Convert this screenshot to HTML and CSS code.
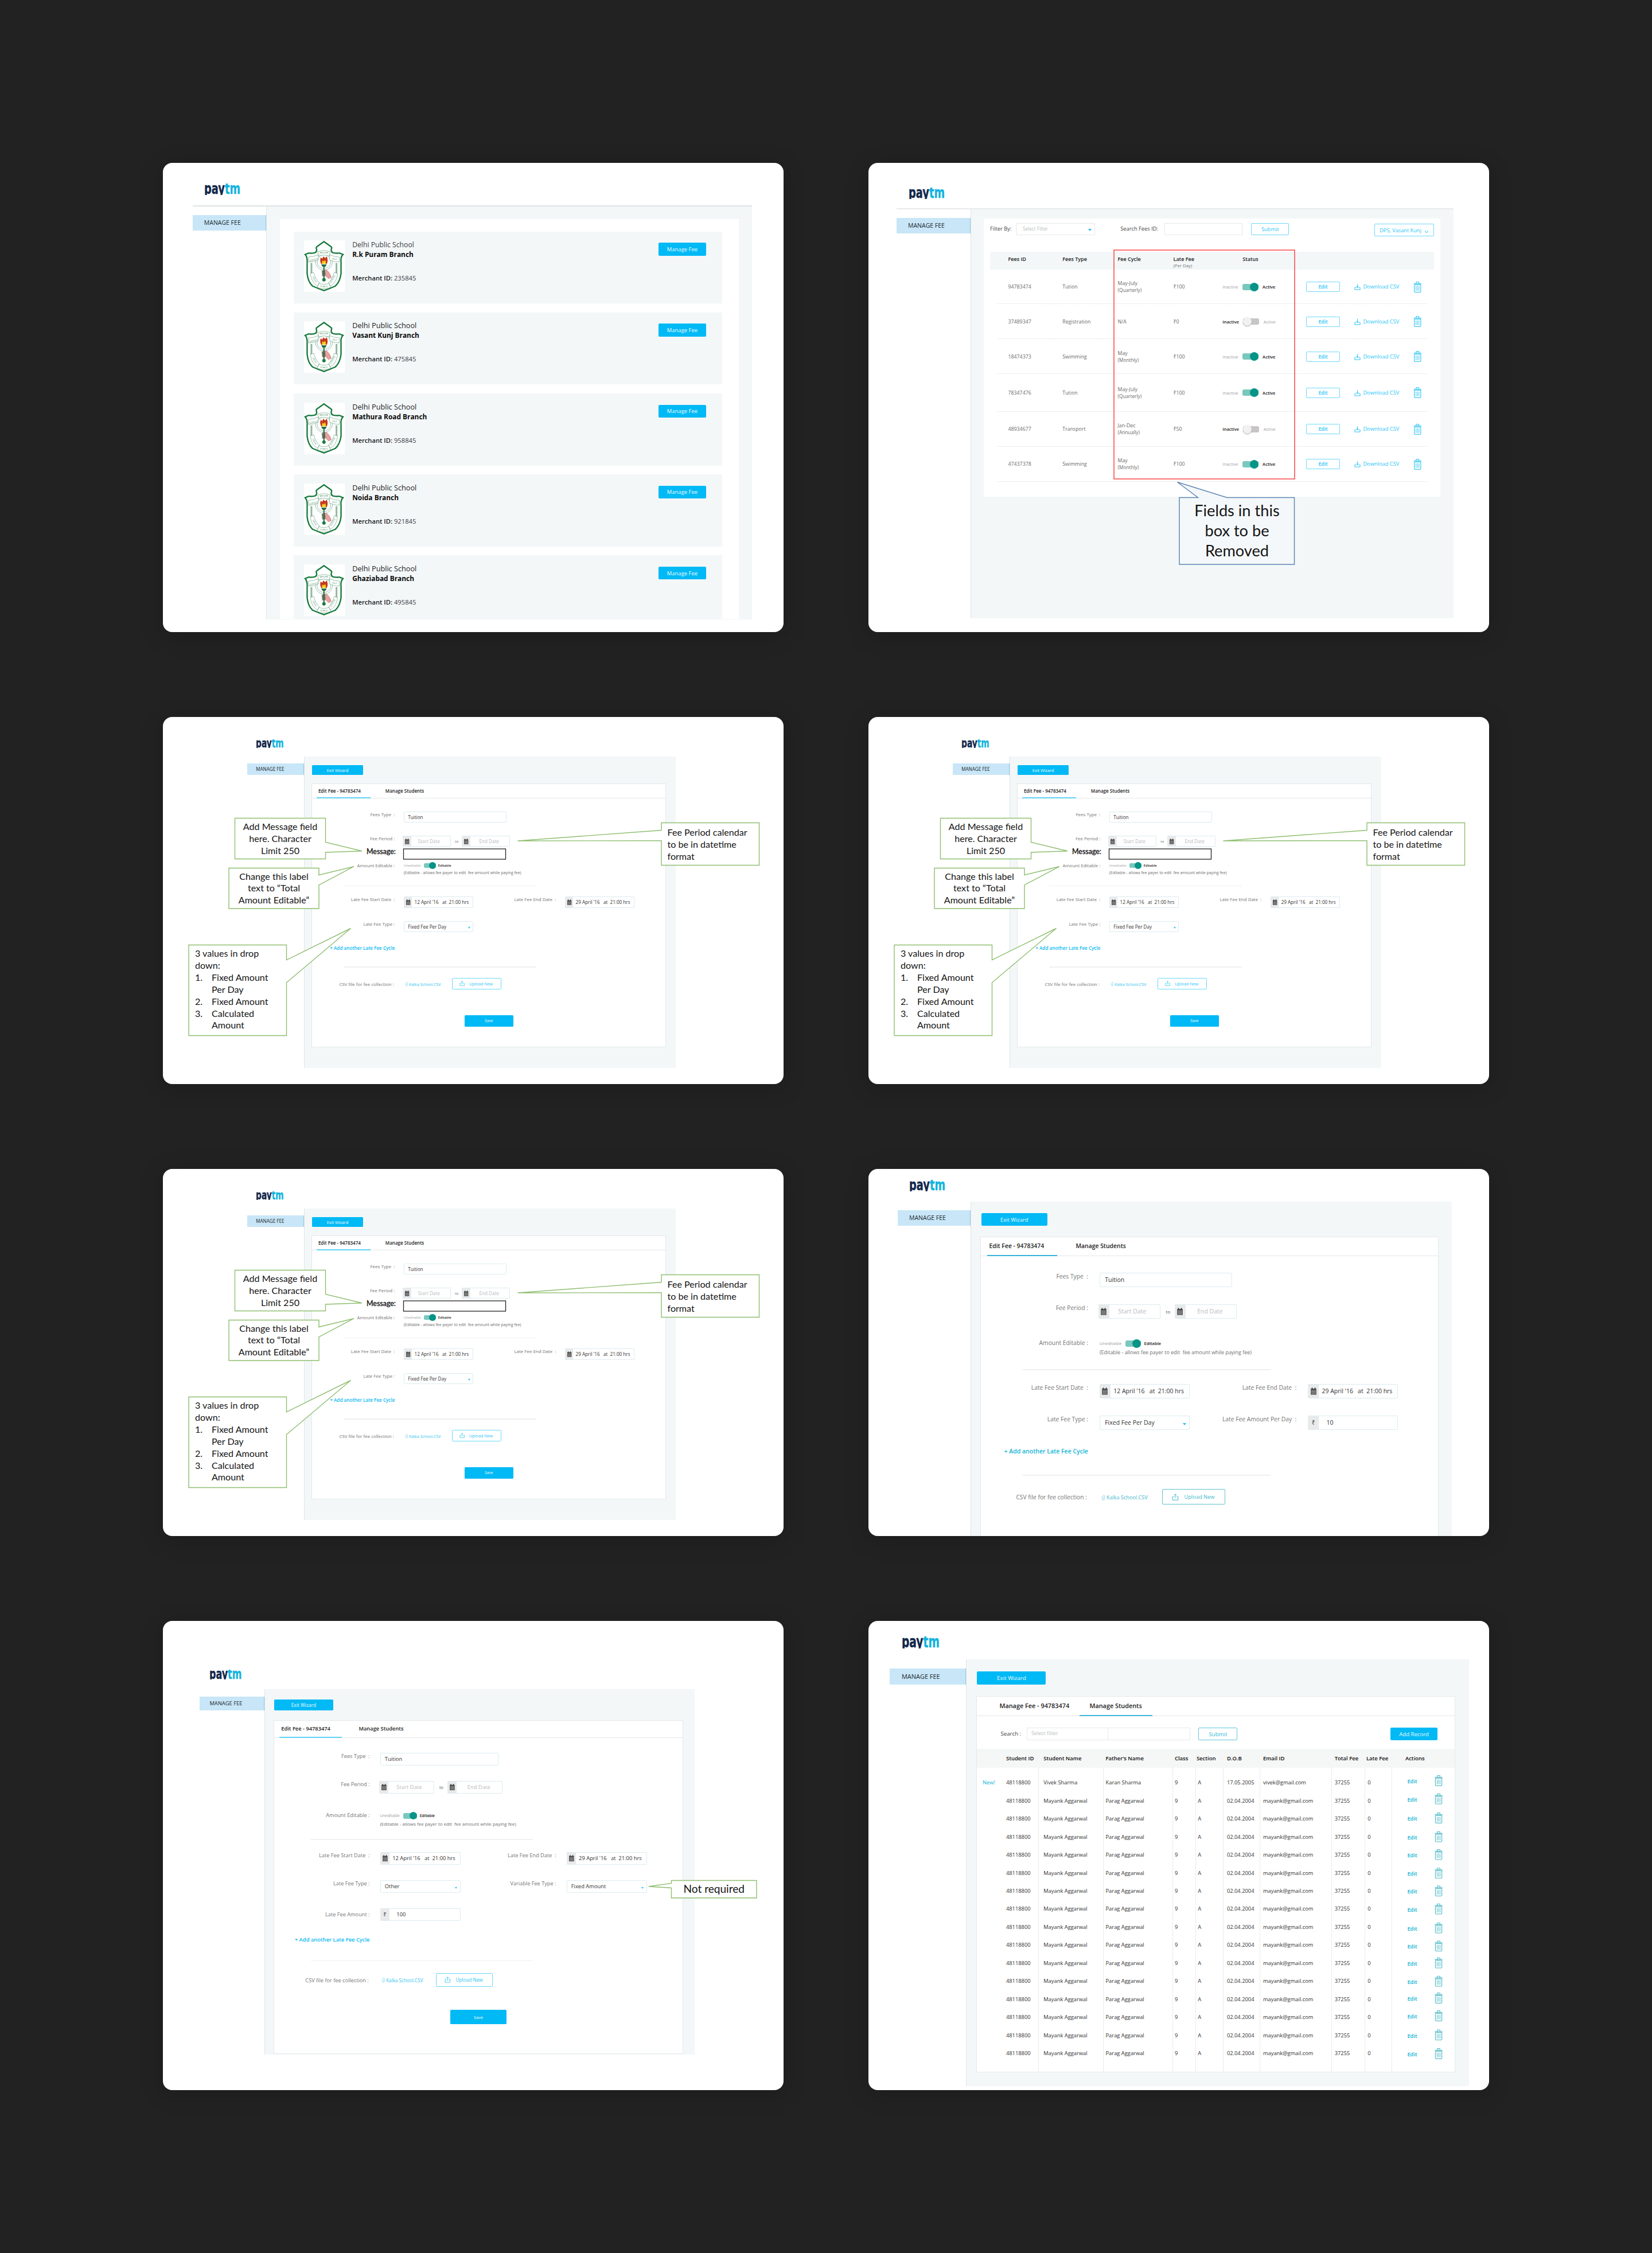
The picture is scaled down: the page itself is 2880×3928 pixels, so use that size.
FILE: index.html
```html
<!DOCTYPE html>
<html lang="en">
<head>
<meta charset="utf-8">
<title>Paytm fee management screens</title>
<link rel="stylesheet" href="styles.css">
</head>
<body>
<svg class="sprite" aria-hidden="true">
  <symbol id="trash" viewBox="0 0 14 19"><g fill="none" stroke="currentColor"><path d="M.3 3.6H13.7M4.6 3.4V1.4Q4.6.6 5.4.6H8.6Q9.4.6 9.4 1.4V3.4M1.4 5.4V17Q1.4 18.4 2.8 18.4H11.2Q12.6 18.4 12.6 17V5.4H1.4" stroke-width="1.2"/><path d="M4.4 7.6V15.8M7 7.6V15.8M9.6 7.6V15.8" stroke-width="1"/></g></symbol>
  <symbol id="calendar" viewBox="0 0 12 13"><path d="M1.200 2H10.800V12.6H1.200Z" fill="#4a4a4a"/><path d="M3.500.2V3M8.500.2V3" stroke="#333" stroke-width="1.500"/><path d="M1.800 5H10.200M1.800 7.500H10.200M1.800 10H10.200M3.800 5V12M6 5V12M8.200 5V12" stroke="#b5b5b5" stroke-width=".6"/></symbol>
  <symbol id="download" viewBox="0 0 12 12"><g fill="none" stroke="currentColor" stroke-width="1.1"><path d="M6 .5V7.5M3.6 5.2L6 7.6L8.4 5.2M3.2 7.6H1V11.4H11V7.6H8.8"/></g></symbol>
  <symbol id="upload" viewBox="0 0 12 12"><g fill="none" stroke="currentColor" stroke-width="1"><path d="M6 8V1M3.8 3L6 .8L8.2 3M3.6 5.4H1.2V11.2H10.8V5.4H8.4"/></g></symbol>
  <symbol id="clip" viewBox="0 0 8 12"><path d="M5.6 2.4V8.6Q5.6 10 4.4 10T3.2 8.6V3Q3.2.8 5 .8T7 3V8.8Q7 11.4 4.4 11.4T1.6 8.8V3.4" fill="none" stroke="currentColor" stroke-width=".6"/></symbol>
  <symbol id="logo" viewBox="0 0 63 20"><text x="0" y="17.800" textLength="63" lengthAdjust="spacingAndGlyphs" class="logo-text"><tspan fill="#12284c" stroke="#12284c">pay</tspan><tspan fill="#12b3dd" stroke="#12b3dd">tm</tspan></text></symbol>
  <symbol id="crest" viewBox="0 0 72 90">
    <path fill="#fff" d="M0 0H72V90H0Z"/>
    <path d="M35 2L23 10.5Q20.5 12 22 15Q23 20.500 19 21.500Q12 23 8 22L2 24.500Q6 29 5.500 38V58Q7 73 15 80Q24 84 35 88Q46 84 55 80Q63 73 65 58V38Q64 29 68.500 24.500L62 22Q58 23 51 21.500Q47 20.500 48 15Q49.500 12 47 10.500Z" fill="#fff" stroke="#187a3e" stroke-width="2.400"/>
    <g fill="#fff" stroke="#6ea587" stroke-width=".7"><circle cx="35" cy="37" r="15"/><circle cx="35" cy="37" r="12"/><path d="M8 29Q16 29 25 25V34Q17 38 8 38ZM62 29Q54 29 45 25V34Q53 38 62 38ZM24 20Q35 15 46 20L44 27Q35 24 26 27Z"/><path d="M11 58L17 56Q20 68 27 74L24 80Q13 74 11 58ZM59 58L53 56Q50 68 43 74L46 80Q57 74 59 58ZM26 75Q35 79 44 75L47 82Q35 88 23 82Z"/></g>
    <path d="M13 40V57M57 40V57" stroke="#4b8f68" stroke-width="3" stroke-dasharray="1.300 .7"/>
    <path d="M34 51L40 52Q46 57 48 65L43 67L38 62L34 63Z" fill="#e8a0a0" stroke="#a66" stroke-width=".5"/>
    <path d="M31 53L37 52L38 61L32 63Z" fill="#7d7a68"/>
    <path d="M30 42H40L37.500 46H32.500ZM34 46H36V68H34Z" fill="#256b45"/><circle cx="35" cy="69" r="3" fill="#187a3e"/>
    <path d="M30 41Q27 34 29.500 30L32 32L34 28L37 31L40 28Q43 36 40 41Z" fill="#c3391d"/><path d="M32 41Q31 37 33 35L35 37L37 34Q39 38 38 41Z" fill="#f6d21c"/>
    <g class="crest-text"><text x="9.500" y="35.500" transform="rotate(-12 16 34)">SERVICE</text><text x="27.500" y="23">BEFORE</text><text x="49" y="34" transform="rotate(10 54 34)">SELF</text><text x="28.500" y="82">PUBLIC</text><text x="13" y="69" transform="rotate(60 18 68)">DELHI</text><text x="44" y="69" transform="rotate(-60 51 69)">SCHOOL</text></g>
  </symbol>
</svg>

<main class="board">
  <section class="card tall card-schools">
    <svg class="logo"><use href="#logo"/></svg>
    <div class="shell ruled">
      <nav class="side"><a class="side-item">MANAGE FEE</a></nav>
      <div class="content"><div class="school-list" id="schools"></div></div>
    </div>
  </section>

  <section class="card tall card-fees">
    <svg class="logo"><use href="#logo"/></svg>
    <div class="shell ruled">
      <nav class="side"><a class="side-item">MANAGE FEE</a></nav>
      <div class="content">
        <div class="fees-panel">
          <div class="filters">
            <label>Filter By:</label><span class="box select">Select Filter<i class="caret"></i></span>
            <label class="search-label">Search Fees ID:</label><span class="box"></span>
            <button class="outline submit">Submit</button>
            <button class="outline branch">DPS, Vasant Kunj<svg viewBox="0 0 8 6"><path d="M1 1L4 5L7 1" fill="none" stroke="currentColor"/></svg></button>
          </div>
          <div class="fee-row fee-head"><b>Fees ID</b><b>Fees Type</b><b>Fee Cycle</b><b>Late Fee<small>(Per Day)</small></b><b class="status-title">Status</b></div>
          <div id="fees"></div>
        </div>
      </div>
    </div>
    <svg class="marks" viewBox="0 0 1082 818"><rect x="428" y="152" width="315" height="399" fill="none" stroke="#f8383a" stroke-width="1.400"/><path d="M542 583.500H574.500L538.500 556.500L625 583.500H742.500V700H542Z" fill="#f4f8fa" stroke="#5f87b2" stroke-width="1.500"/></svg>
    <p class="note note-remove">Fields in this<br>box to be<br>Removed</p>
  </section>

  <section class="card card-edit" data-form="annotated"></section>
  <section class="card card-edit" data-form="annotated"></section>
  <section class="card card-edit" data-form="annotated"></section>
  <section class="card card-large" data-form="perday"></section>
  <section class="card tall card-other" data-form="other"></section>

  <section class="card tall card-students">
    <svg class="logo"><use href="#logo"/></svg>
    <div class="shell">
      <nav class="side"><a class="side-item">MANAGE FEE</a></nav>
      <div class="content">
        <button class="solid exit">Exit Wizard</button>
        <div class="panel">
          <div class="tabs"><span class="tab">Manage Fee - 94783474</span><span class="tab active">Manage Students</span></div>
          <div class="search-bar"><label>Search :</label><span class="box">Select filter</span><span class="box second"></span><button class="outline">Submit</button><button class="solid add">Add Record</button></div>
          <div class="students">
            <div class="student head"><b></b><b>Student ID</b><b>Student Name</b><b>Father’s Name</b><b>Class</b><b>Section</b><b>D.O.B</b><b>Email ID</b><b>Total Fee</b><b>Late Fee</b><b class="actions">Actions</b></div>
            <div class="student-body" id="students"></div>
          </div>
        </div>
      </div>
    </div>
  </section>
</main>
<script src="app.js"></script>
</body>
</html>
```
FILE: styles.css
```css
* { box-sizing: border-box; }
body { margin: 0; background: #222; font-family: "Open Sans", "Noto Sans", sans-serif; color: #333; }
.sprite { display: none; }
button { font: inherit; padding: 0; margin: 0; white-space: nowrap; }
.board { width: 2880px; height: 3928px; padding: 284px; display: grid; grid-template-columns: 1082px 1082px; grid-template-rows: 818px 640px 640px 818px; gap: 148px; }
.card { --x: 1px; --y: 1px; position: relative; overflow: hidden; background: #fff; border-radius: 16px; box-shadow: 0 6px 40px rgba(0,0,0,.18); display: flex; flex-direction: column; align-items: flex-start; white-space: nowrap; }
.logo { display: block; width: calc(63 * var(--x)); height: calc(20 * var(--x)); flex: none; }
.logo-text { font-family: "DejaVu Sans", sans-serif; font-weight: 700; font-size: 27px; stroke-width: .5px; }
.crest-text { font-size: 4px; fill: #4b8f68; }

/* application shell */
.shell { display: flex; flex: none; }
.side { width: calc(127.4 * var(--x)); padding-top: calc(15 * var(--y)); }
.side-item { display: block; height: calc(27 * var(--y)); line-height: calc(27 * var(--y)); padding-left: calc(20 * var(--x)); background: #c8e6f7; border-right: 1px solid #8fcbe2; font-size: calc(10.500 * var(--x)); color: #20282e; }
.content { width: calc(838.2 * var(--x)); background: #f3f7f8; border-left: 1px solid #dfe5e7; }
.solid { display: block; border: 0; border-radius: calc(2 * var(--x)); background: #00b9f5; color: #f0fbff; font-size: calc(9.400 * var(--x)); }
.outline { border: 1.5px solid #6fd9fa; border-radius: calc(2 * var(--x)); background: #fff; color: #2cc6f6; }

/* school list */
.card-schools { padding-left: 51.8px; }
.card-schools .logo { margin: 36px 0 0 20px; }
.card-schools .ruled { margin-top: 17.7px; }
.ruled { border-top: 2px solid #dfe3e4; }
.card-schools .side { width: 128.4px; }
.card-schools .content { width: 847px; height: 720px; padding: 22.500px 23px 0; }
.school-list { background: #fff; height: 697px; padding: 21.500px 29px 0 24px; overflow: hidden; }
.school { height: 125.600px; margin-bottom: 15.600px; background: #f3f7f8; display: flex; padding: 14.500px 28px 0 18px; }
.school svg { width: 71.500px; height: 90px; margin: 1px 12.500px 0 0; flex: none; }
.school div { flex: 1; line-height: 17px; font-size: 12.700px; color: #1f2326; }
.school:first-child .name { font-size: 12.200px; color: #3c4043; }
.school strong { display: block; font-size: 11.900px; color: #0c0c0c; }
.school .mid { margin: 24px 0 0; font-size: 11.200px; color: #3c4043; }
.school .mid b { font-weight: 600; color: #181818; }
.school .solid { width: 83.500px; height: 22.400px; margin-top: 5px; font-size: 9.500px; }

/* fee table */
.card-fees { padding-left: 49px; }
.card-fees .logo { margin: 42.500px 0 0 20.500px; }
.card-fees .ruled { margin-top: 16.500px; border-color: #e8eaeb; }
.card-fees .side { width: 128.500px; }
.card-fees .content { width: 842.500px; height: 713px; padding: 16.300px 23px 0 22.500px; }
.fees-panel { background: #fff; height: 484.700px; padding: 7.600px 11px 0; }
.filters { display: flex; align-items: flex-start; height: 50px; font-size: 9.300px; color: #444; }
.filters label { width: 46px; line-height: 20px; }
.filters .search-label { width: 76.500px; margin-left: 44.500px; }
.box { display: block; border: 1.500px solid #e6e9ea; background: #fff; color: #bbbec0; }
.filters .box { width: 136.700px; height: 21px; padding-left: 10px; line-height: 18px; font-size: 8.200px; position: relative; }
.caret { position: absolute; right: calc(5 * var(--x)); top: 50%; border: calc(3 * var(--x)) solid transparent; border-top: calc(4 * var(--x)) solid #2cc3f2; border-bottom: 0; }
.filters .submit { width: 66px; height: 21px; margin-left: 15px; font-size: 9.200px; }
.filters .branch { width: 104px; height: 21.500px; margin: 1.500px 0 0 auto; font-size: 9.200px; }
.branch svg { width: 8px; height: 6px; margin-left: 5px; vertical-align: -2px; }
.fee-row { display: grid; grid-template-columns: 94.800px 96.200px 97px 85.800px 145.600px 84px 103.500px 20px; padding-left: 31.500px; align-items: center; font-size: 8.800px; color: #6c6c6c; position: relative; }
.fee-head { height: 31px; background: #f3f7f8; align-items: start; line-height: 26px; font-size: 9px; color: #222; }
.fee-head b { font-weight: 600; position: relative; }
.fee-head small { position: absolute; left: 0; top: 11.500px; font-size: 7.800px; font-weight: 400; color: #777; }
.fee-head .status-title { padding-left: 35px; }
.fee-item::after { content: ""; position: absolute; left: 13px; right: 12px; bottom: 0; border-bottom: 1px dotted #d9dddd; }
.fee-item { line-height: 12px; }
.fee-item small { display: block; font-size: 8.300px; }
.status { display: flex; align-items: center; font-size: calc(7.600 * var(--x)); color: #a2a2a2; }
.status b { color: #222; font-weight: 600; }
.toggle { display: block; position: relative; width: calc(28 * var(--x)); height: calc(11 * var(--x)); border-radius: calc(3 * var(--x)); background: #78c8be; margin: 0 calc(7.500 * var(--x)) 0 calc(7 * var(--x)); }
.toggle::after { content: ""; position: absolute; top: calc(-2 * var(--x)); right: 0; width: calc(15 * var(--x)); height: calc(15 * var(--x)); border-radius: 50%; background: #079487; }
.toggle.off { background: #c7c5c6; }
.toggle.off::after { right: auto; left: 0; background: #f1f1f1; box-shadow: 0 1px 2px #aaa; }
.fee-item .outline { width: 59.500px; height: 18px; font-size: 8.800px; font-weight: 600; }
.dl { color: #2cc6f6; font-size: 9.300px; display: flex; align-items: center; }
.dl svg { width: 11px; height: 12px; margin-right: 4.500px; }
.fee-item .trash { width: 14.500px; height: 19px; color: #3fc9f3; }

/* wizard form */
.exit { width: calc(114.700 * var(--x)); height: calc(22 * var(--y)); margin: calc(20 * var(--y)) 0 0 calc(17.500 * var(--x)); }
.panel { width: calc(798.500 * var(--x)); margin: calc(19.300 * var(--y)) 0 0 calc(16 * var(--x)); background: #fff; border: 1px solid #e4e9eb; }
.tabs { display: flex; height: calc(33 * var(--y)); border-bottom: 1px solid #e4e7e8; font-size: calc(10.400 * var(--x)); font-weight: 600; line-height: calc(31 * var(--y)); color: #222; }
.tab { position: relative; }
.card-edit, .card-large, .card-other { --line: #5fd1f8; }
.card-large { --line: #35b3de; }
.tab.active::after { content: ""; position: absolute; left: 0; right: 0; bottom: -1px; height: 2px; background: var(--line); }
.form .tab.active { width: calc(121.800 * var(--x)); margin: 0 calc(32.800 * var(--x)) 0 calc(10.500 * var(--x)); padding-left: calc(3.500 * var(--x)); }
.row { display: flex; align-items: flex-start; height: calc(25.200 * var(--y)); margin-top: calc(29.800 * var(--y)); font-size: calc(10.500 * var(--x)); }
.row > label { width: calc(186.500 * var(--x)); margin-right: calc(20.300 * var(--x)); text-align: right; line-height: calc(13 * var(--y)); font-size: calc(10.300 * var(--x)); color: #767676; white-space: pre; flex: none; }
.field { position: relative; display: flex; width: calc(156.500 * var(--x)); height: calc(25 * var(--y)); border: 1px solid #dcebf0; border-radius: calc(2 * var(--x)); line-height: calc(22.500 * var(--y)); padding-left: calc(8 * var(--x)); color: #333; flex: none; white-space: pre; }
.field.wide { width: calc(231 * var(--x)); }
.field.icon { padding-left: 0; border-left: 0; }
.field em { width: calc(18.500 * var(--x)); margin-right: calc(5.500 * var(--x)); background: #e8eaeb; display: flex; align-items: center; justify-content: center; font-style: normal; flex: none; }
.field em svg { width: calc(12 * var(--x)); height: calc(13 * var(--x)); }
.field.money em { margin-right: calc(13.500 * var(--x)); }
.field .caret { top: 55%; }
.field.short { width: calc(107.500 * var(--x)); color: #b9bcbe; margin-left: calc(-2 * var(--x)); }
.field.short em { margin-right: calc(15.500 * var(--x)); }
.field.short.end em { margin-right: calc(20.500 * var(--x)); }
.to { width: calc(27.500 * var(--x)); text-align: center; font-size: calc(8 * var(--x)); line-height: calc(25 * var(--y)); color: #555; }
.tabs + .row { margin-top: calc(28.800 * var(--y)); }
.row.period { margin-top: calc(30 * var(--y)); height: calc(24.800 * var(--y)); }
.row.editable { height: calc(16 * var(--y)); margin-top: calc(35 * var(--y)); }
.row.editable > label { line-height: calc(15.500 * var(--y)); }
.row .status { height: calc(16 * var(--y)); margin-left: calc(-.500 * var(--x)); }
.row .toggle { width: calc(27 * var(--x)); margin: 0 calc(5 * var(--x)) 0 calc(7 * var(--x)); }
.hint { height: calc(12 * var(--y)); line-height: calc(12 * var(--y)); margin: calc(2.300 * var(--y)) 0 0 calc(206.500 * var(--x)); font-size: calc(8.950 * var(--x)); color: #6f6f6f; white-space: pre; }
.divider { height: calc(2 * var(--y)); margin: calc(23 * var(--y)) 0 calc(-6.500 * var(--y)) calc(71.500 * var(--x)); width: calc(433.500 * var(--x)); background: #eef0f1; }
.more { width: calc(186.500 * var(--x)); height: calc(14 * var(--y)); line-height: calc(14 * var(--y)); margin-top: calc(29.800 * var(--y)); display: flex; justify-content: flex-end; font-size: calc(10.500 * var(--x)); font-weight: 600; color: #0abaf2; }
.card-large .more { color: #12b4d4; }
.more + .divider { margin-top: calc(34.800 * var(--y)); margin-bottom: 0; }
.row.upload { height: calc(26.300 * var(--y)); margin-top: calc(23 * var(--y)); }
.row.upload > label { width: calc(184.500 * var(--x)); line-height: calc(28 * var(--y)); margin-right: calc(25 * var(--x)); }
.file { display: flex; align-items: center; width: calc(106 * var(--x)); height: calc(28.500 * var(--y)); font-size: calc(9.100 * var(--x)); color: #35c5ee; }
.file svg { width: calc(7 * var(--x)); height: calc(12 * var(--x)); margin-right: calc(2 * var(--x)); opacity: .7; }
.upload button { display: flex; align-items: center; width: calc(110.400 * var(--x)); height: calc(26.500 * var(--y)); padding-left: calc(16 * var(--x)); font-size: calc(9.300 * var(--x)); }
.upload button svg { width: calc(12 * var(--x)); height: calc(12 * var(--x)); margin-right: calc(9.500 * var(--x)); }
.card-large .outline, .card-large .file { color: #3fb9cd; border-color: #60c2cd; }
.save { width: calc(110 * var(--x)); height: calc(27 * var(--y)); margin: calc(58 * var(--y)) 0 0 calc(343.400 * var(--x)); font-size: calc(8.600 * var(--x)); }

.card-edit { --x: .7736px; --y: .769px; padding-left: 146.700px; }
.card-edit .logo { margin: 39px 0 0 15.500px; }
.card-edit .shell { margin-top: 14.500px; }
.card-edit .side { width: 99px; }
.card-edit .content { height: 543px; }
.card-edit .panel { height: 460px; }
.card-large { padding-left: 51px; }
.card-large .logo { margin: 18.500px 0 0 19.500px; }
.card-large .shell { margin-top: 18.500px; }
.card-large .content, .card-students .content { flex: none; }
.card-large .panel { height: 540px; }
.card-other { --x: .8944px; --y: .894px; padding-left: 63.500px; }
.card-other .logo { margin: 84.500px 0 0 17.500px; }
.card-other .shell { margin-top: 16.300px; }
.card-other .content { height: 637px; }
.card-other .panel { height: 582px; }
.card-other .more + .divider { margin-top: calc(32.400 * var(--y)); }
.card-other .save { margin-top: calc(45.900 * var(--y)); }
.row.amount > label { line-height: calc(25 * var(--y)); }

/* review notes laid over the screens */
.marks { position: absolute; left: 0; top: 0; width: 100%; height: 100%; }
.note { position: absolute; margin: 0; font-family: Lato, sans-serif; font-size: 16.100px; line-height: 20.900px; color: #141414; text-align: center; }
.note-remove { left: 542px; top: 589px; width: 201px; font-size: 27.200px; line-height: 34.800px; }
.note-message { left: 125.500px; top: 181px; width: 158px; }
.note-label { left: 115px; top: 267.500px; width: 157px; }
.note-values { left: 56px; top: 402px; text-align: left; }
.note-values ol { margin: 0; padding: 0 0 0 29px; list-style: none; counter-reset: n; }
.note-values li { counter-increment: n; position: relative; }
.note-values li::before { content: counter(n) "."; position: absolute; left: -29px; }
.note-period { left: 879.500px; top: 191px; text-align: left; }
.note-msg { left: 355px; top: 225px; font-size: 12.400px; font-weight: 500; -webkit-text-stroke: .3px #1c1c1c; }
.note-not { left: 886.500px; top: 457px; width: 148.500px; font-size: 19.100px; }

/* student list */
.card-students { --x: 1.0455px; --y: 1.045px; --line: #3fb6d8; padding-left: 37px; }
.card-students .logo { margin: 27px 0 0 21px; }
.card-students .shell { margin-top: 19px; }
.card-students .content { height: 744px; }
.card-students .panel { height: 656px; }
.card-students .tab { margin-left: 39.500px; width: 139.500px; }
.card-students .tab.active { margin-left: 0; padding-left: 17.500px; width: 126.700px; }
.search-bar { display: flex; align-items: flex-start; height: 57px; padding: 20px 0 0 41.500px; font-size: 9.700px; line-height: 21px; color: #444; }
.search-bar label { width: 45.500px; }
.search-bar .box { width: 142.500px; height: 21.500px; padding-left: 7px; line-height: 18px; font-size: 9px; }
.search-bar .second { border-left: 0; }
.search-bar .outline { width: 68px; height: 22px; margin-left: 14.500px; border-color: #5fc6d8; color: #35b9d6; }
.search-bar .add { width: 81.400px; height: 21.500px; margin-left: 267px; font-size: 9.600px; }
.student { display: grid; grid-template-columns: 51px 65.300px 108.300px 120.400px 38px 53px 63px 124.800px 55.200px 58px 1fr; height: 31.450px; line-height: 31.450px; font-size: 9.350px; color: #333; }
.student.head { height: 33px; line-height: 34px; background: #f5f6f6; font-size: 9.500px; color: #111; }
.student b { font-weight: 600; }
.student .actions { padding-left: 10px; }
.student-body { height: 531px; padding-top: 10px; background: linear-gradient(90deg, transparent 106.500px, #e9ebec 106.500px 107.500px, transparent 107.500px 219.500px, #e9ebec 219.500px 220.500px, transparent 220.500px 340.500px, #e9ebec 340.500px 341.500px, transparent 341.500px 380.500px, #e9ebec 380.500px 381.500px, transparent 381.500px 428.500px, #e9ebec 428.500px 429.500px, transparent 429.500px 493px, #e9ebec 493px 494px, transparent 494px 618px, #e9ebec 618px 619px, transparent 619px 675.500px, #e9ebec 675.500px 676.500px, transparent 676.500px 722.500px, #e9ebec 722.500px 723.500px, transparent 723.500px); }
.new { color: #12b4d2; padding-left: 10px; }
.student .act { display: flex; align-items: center; transform: translateY(var(--dy)); color: #12b4d2; font-weight: 600; padding-left: 13.500px; }
.student .act svg { width: 14px; height: 19px; color: #58bec9; position: relative; top: -1.300px; margin-left: 30.500px; }
```
FILE: app.js
```js
const icon = (id, cls = '') => `<svg class="${cls}"><use href="#${id}"/></svg>`;

const schools = [['R.k Puram', 235845], ['Vasant Kunj', 475845], ['Mathura Road', 958845], ['Noida', 921845], ['Ghaziabad', 495845]];
document.getElementById('schools').innerHTML = schools.map(([branch, id]) =>
  `<article class="school">${icon('crest')}<div><span class="name">Delhi Public School</span><strong>${branch} Branch</strong><p class="mid"><b>Merchant ID:</b> ${id}</p></div><button class="solid">Manage Fee</button></article>`).join('');

const fees = [
  ['94783474', 'Tution', 'May-July', '(Quarterly)', 100, true, 60.3],
  ['37489347', 'Registration', 'N/A', '', 0, false, 61],
  ['18474373', 'Swimming', 'May', '(Monthly)', 100, true, 61],
  ['78347476', 'Tution', 'May-July', '(Quarterly)', 100, true, 65.4],
  ['48934677', 'Transport', 'Jan-Dec', '(Annually)', 50, false, 61.3],
  ['47437378', 'Swimming', 'May', '(Monthly)', 100, true, 61]
];
document.getElementById('fees').innerHTML = fees.map(([id, type, cycle, per, fee, on, h]) =>
  `<div class="fee-row fee-item" style="height:${h}px"><span>${id}</span><span>${type}</span><span>${cycle}<small>${per}</small></span><span>₹${fee}</span>
  <span class="status">${on ? 'Inactive' : '<b>Inactive</b>'}<i class="toggle ${on ? '' : 'off'}"></i>${on ? '<b>Active</b>' : 'Active'}</span>
  <button class="outline">Edit</button><span class="dl">${icon('download')}Download CSV</span>${icon('trash', 'trash')}</div>`).join('');

const dated = text => `<span class="field icon"><em>${icon('calendar')}</em>${text}</span>`;
const money = n => `<span class="field icon money"><em>₹</em>${n}</span>`;
const select = text => `<span class="field">${text}<i class="caret"></i></span>`;

const notes = {
  annotated: `<svg class="marks" viewBox="0 0 1082 640"><rect x="419.500" y="230" width="178" height="18" fill="#fff" stroke="#222" stroke-width="1.300"/>
    <g fill="#fff" stroke="#8fbe70" stroke-width="1.400"><path d="M125.500 176.500H283.500V218.500L347 233.700L283.500 236V247.500H125.500Z"/><path d="M115 263.500H272V275.500L333 260.700L272 293V334H115Z"/><path d="M45 397.500H215.500V423.700L327.500 368.500L215.500 463V555.500H45Z"/><path d="M869 184.500H1039.500V258.500H869V215.700L618.500 216L869 197.500Z"/></g></svg>
    <p class="note note-message">Add Message field<br>here. Character<br>Limit 250</p><p class="note note-label">Change this label<br>text to “Total<br>Amount Editable”</p>
    <div class="note note-values">3 values in drop<br>down:<ol><li>Fixed Amount<br>Per Day</li><li>Fixed Amount</li><li>Calculated<br>Amount</li></ol></div>
    <p class="note note-period">Fee Period calendar<br>to be in datetime<br>format</p><p class="note note-msg">Message:</p>`,
  perday: '',
  other: `<svg class="marks" viewBox="0 0 1082 818"><path d="M886.500 452.500H1035V483H886.500V465.500L847 463L886.500 457.500Z" fill="#fff" stroke="#8fbe70" stroke-width="1.400"/></svg><p class="note note-not">Not required</p>`
};

document.querySelectorAll('[data-form]').forEach(card => {
  const kind = card.dataset.form;
  const second = {
    annotated: '',
    perday: `<label>Late Fee Amount Per Day  :</label>${money(10)}`,
    other: `<label>Variable Fee Type :</label>${select('Fixed Amount')}`
  }[kind];
  card.innerHTML = `${icon('logo', 'logo')}
  <div class="shell"><nav class="side"><a class="side-item">MANAGE FEE</a></nav><div class="content">
    <button class="solid exit">Exit Wizard</button>
    <div class="panel form">
      <div class="tabs"><span class="tab active">Edit Fee - 94783474</span><span class="tab">Manage Students</span></div>
      <div class="row"><label>Fees Type  :</label><span class="field wide">Tuition</span></div>
      <div class="row period"><label>Fee Period :</label><span class="field icon short"><em>${icon('calendar')}</em>Start Date</span><span class="to">to</span><span class="field icon short end"><em>${icon('calendar')}</em>End Date</span></div>
      <div class="row editable"><label>Amount Editable :</label><span class="status">Uneditable<i class="toggle"></i><b>Editable</b></span></div>
      <div class="hint">(Editable - allows fee payer to edit  fee amount while paying fee)</div>
      <div class="divider"></div>
      <div class="row"><label>Late Fee Start Date  :</label>${dated("12 April '16   at  21:00 hrs")}<label>Late Fee End Date  :</label>${dated("29 April '16   at  21:00 hrs")}</div>
      <div class="row"><label>Late Fee Type :</label>${select(kind === 'other' ? 'Other' : 'Fixed Fee Per Day')}${second}</div>
      ${kind === 'other' ? `<div class="row amount"><label>Late Fee Amount :</label>${money(100)}</div>` : ''}
      <div class="more">+ Add another Late Fee Cycle</div>
      <div class="divider"></div>
      <div class="row upload"><label>CSV file for fee collection :</label><span class="file">${icon('clip')}Kalka School.CSV</span><button class="outline">${icon('upload')}Upload New</button></div>
      ${kind === 'perday' ? '' : '<button class="solid save">Save</button>'}
    </div></div></div>${notes[kind]}`;
});

const shifts = [-2, -2.3, 0, .7, .7, 1.3, 1.3, 1.7, 2.7, 3.3, .7, 1.7, -1, -1, 1.3, 2];
document.getElementById('students').innerHTML = shifts.map((dy, i) => {
  const p = i ? ['', 'Mayank Aggarwal', 'Parag Aggarwal', '02.04.2004', 'mayank@gmail.com'] : ['New!', 'Vivek Sharma', 'Karan Sharma', '17.05.2005', 'vivek@gmail.com'];
  return `<div class="student"><span class="new">${p[0]}</span><span>48118800</span><span>${p[1]}</span><span>${p[2]}</span><span>9</span><span>&nbsp;A</span><span>${p[3]}</span><span>${p[4]}</span><span>37255</span><span>&nbsp;0</span><span class="act" style="--dy:${dy}px">Edit${icon('trash')}</span></div>`;
}).join('');
```
